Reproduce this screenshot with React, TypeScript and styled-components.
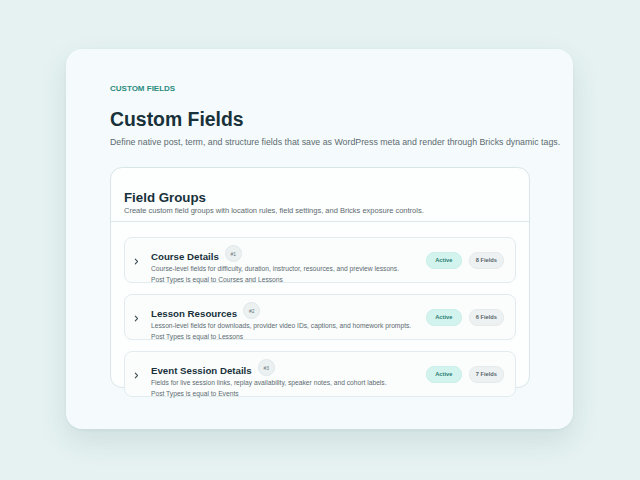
import React from 'react'
import styled, { createGlobalStyle } from 'styled-components'

type FieldGroup = {
  id: number
  title: string
  description: string
  rule: string
  status: string
  fieldCount: number
}

const groups: FieldGroup[] = [
  {
    id: 1,
    title: 'Course Details',
    description: 'Course-level fields for difficulty, duration, instructor, resources, and preview lessons.',
    rule: 'Post Types is equal to Courses and Lessons',
    status: 'Active',
    fieldCount: 8
  },
  {
    id: 2,
    title: 'Lesson Resources',
    description: 'Lesson-level fields for downloads, provider video IDs, captions, and homework prompts.',
    rule: 'Post Types is equal to Lessons',
    status: 'Active',
    fieldCount: 6
  },
  {
    id: 3,
    title: 'Event Session Details',
    description: 'Fields for live session links, replay availability, speaker notes, and cohort labels.',
    rule: 'Post Types is equal to Events',
    status: 'Active',
    fieldCount: 7
  }
]

const GlobalStyle = createGlobalStyle`
  html, body {
    margin: 0;
    padding: 0;
    background: #e6f2f2;
  }
  body {
    font-family: "Liberation Sans", Arial, sans-serif;
    -webkit-font-smoothing: antialiased;
  }
`

const Page = styled.div`
  width: 640px;
  height: 480px;
  box-sizing: border-box;
  padding: 49px 67px 0 66px;
  background: #e6f2f2;
`

const Panel = styled.section`
  height: 380px;
  box-sizing: border-box;
  padding: 34px 44px 0 44px;
  background: #f5fbfc;
  border-radius: 16px;
  box-shadow: 0 12px 28px rgba(30, 80, 80, 0.12), 0 1px 3px rgba(30, 80, 80, 0.06);
`

const Eyebrow = styled.div`
  font-size: 8px;
  line-height: 11px;
  font-weight: 700;
  color: #2b8a80;
  text-transform: uppercase;
`

const Heading = styled.h1`
  margin: 13px 0 0;
  font-size: 19.4px;
  line-height: 24px;
  font-weight: 700;
  color: #18313a;
`

const Lead = styled.p`
  margin: 4.5px 0 0;
  font-size: 8.8px;
  line-height: 12px;
  color: #5c6a70;
  white-space: nowrap;
`

const GroupsCard = styled.div`
  margin-top: 19.5px;
  width: 420px;
  height: 221px;
  box-sizing: border-box;
  background: #fdfefe;
  border: 1px solid #d9e6e8;
  border-radius: 12px;
`

const CardHeader = styled.header`
  padding: 21.5px 13px 6px;
  border-bottom: 1px solid #dbe6e8;
`

const CardTitle = styled.h2`
  margin: 0;
  font-size: 13.3px;
  line-height: 16px;
  font-weight: 700;
  color: #18313a;
`

const CardSubtitle = styled.p`
  margin: 0;
  font-size: 7.5px;
  line-height: 9.5px;
  color: #5c6a70;
  white-space: nowrap;
`

const GroupList = styled.div`
  display: flex;
  flex-direction: column;
  gap: 11px;
  padding: 15px 13px 0;
`

const GroupRow = styled.div`
  display: flex;
  align-items: center;
  height: 46px;
  box-sizing: border-box;
  padding: 0 11px 0 9px;
  background: #fbfdfd;
  border: 1px solid #e2ecee;
  border-radius: 8px;
`

const Chevron = styled.span`
  display: flex;
  align-items: center;
  width: 17px;
  margin-top: 3px;
  color: #3e4f55;
`

const GroupBody = styled.div`
  flex: 1;
  align-self: flex-start;
  padding-top: 13px;
  min-width: 0;
`

const TitleLine = styled.div`
  display: flex;
  align-items: flex-start;
`

const GroupTitle = styled.h3`
  margin: 0;
  font-size: 9.7px;
  line-height: 12px;
  font-weight: 700;
  color: #18313a;
`

const IdBadge = styled.span`
  display: inline-flex;
  align-items: center;
  justify-content: center;
  width: 17px;
  height: 17px;
  margin: -6px 0 0 6px;
  border-radius: 50%;
  background: #ebf0f1;
  border: 1px solid #e1e8ea;
  box-sizing: border-box;
  font-size: 5px;
  color: #6a777c;
`

const GroupText = styled.p`
  margin: 0;
  font-size: 6.7px;
  line-height: 11px;
  color: #5c6a70;
  white-space: nowrap;
`

const Pills = styled.div`
  display: flex;
  gap: 7px;
`

const Pill = styled.span<{ $tone: 'active' | 'muted' }>`
  display: inline-flex;
  align-items: center;
  height: 15px;
  padding: 0 ${p => (p.$tone === 'active' ? '8.5px' : '6px')};
  border-radius: 8px;
  font-size: 5.7px;
  font-weight: 700;
  background: ${p => (p.$tone === 'active' ? '#d3f4ee' : '#eef1f2')};
  color: ${p => (p.$tone === 'active' ? '#2a7d72' : '#56656b')};
  border: 1px solid ${p => (p.$tone === 'active' ? '#cdefe9' : '#e6eaeb')};
`

function ChevronIcon() {
  return (
    <svg width="5" height="7" viewBox="0 0 5 7" fill="none">
      <path d="M1.3 1.2l2.2 2.3-2.2 2.3" stroke="currentColor" strokeWidth="1.1" strokeLinecap="round" strokeLinejoin="round" />
    </svg>
  )
}

function GroupItem({ group }: { group: FieldGroup }) {
  return (
    <GroupRow>
      <Chevron>
        <ChevronIcon />
      </Chevron>
      <GroupBody>
        <TitleLine>
          <GroupTitle>{group.title}</GroupTitle>
          <IdBadge>#{group.id}</IdBadge>
        </TitleLine>
        <GroupText>{group.description}</GroupText>
        <GroupText>{group.rule}</GroupText>
      </GroupBody>
      <Pills>
        <Pill $tone="active">{group.status}</Pill>
        <Pill $tone="muted">{group.fieldCount} Fields</Pill>
      </Pills>
    </GroupRow>
  )
}

export default function App() {
  return (
    <>
      <GlobalStyle />
      <Page>
        <Panel>
          <Eyebrow>Custom Fields</Eyebrow>
          <Heading>Custom Fields</Heading>
          <Lead>
            Define native post, term, and structure fields that save as WordPress meta and render through Bricks dynamic tags.
          </Lead>
          <GroupsCard>
            <CardHeader>
              <CardTitle>Field Groups</CardTitle>
              <CardSubtitle>Create custom field groups with location rules, field settings, and Bricks exposure controls.</CardSubtitle>
            </CardHeader>
            <GroupList>
              {groups.map(g => (
                <GroupItem key={g.id} group={g} />
              ))}
            </GroupList>
          </GroupsCard>
        </Panel>
      </Page>
    </>
  )
}
